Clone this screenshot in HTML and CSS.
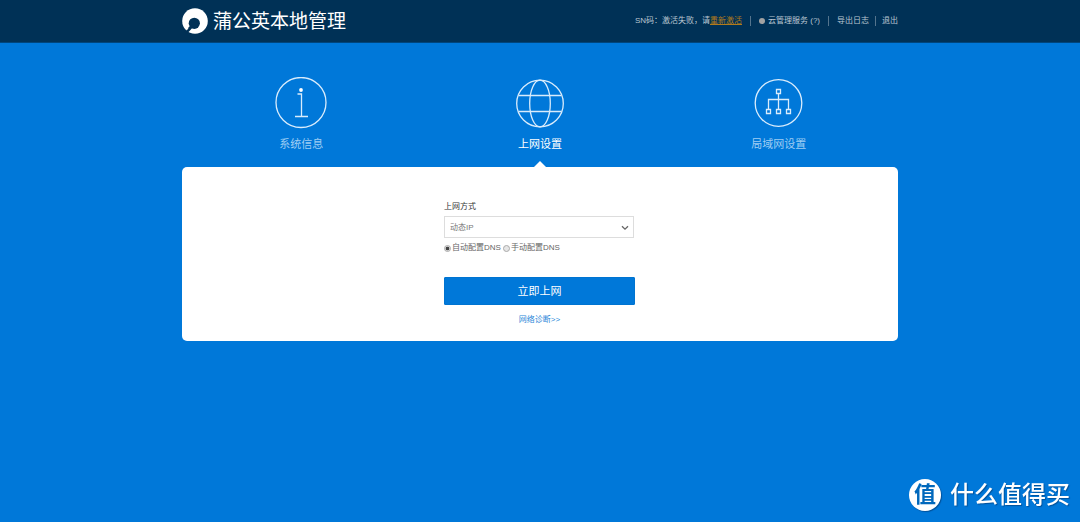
FILE: index.html
```html
<!DOCTYPE html>
<html lang="zh-CN">
<head>
<meta charset="utf-8">
<meta name="viewport" content="width=device-width, initial-scale=1">
<title>蒲公英本地管理</title>
<link rel="stylesheet" href="styles.css">
</head>
<body>
<header class="topbar">
  <div class="container topbar-inner">
    <div class="brand">
      <svg class="brand-logo" viewBox="0 0 26 26" aria-hidden="true">
        <circle cx="13" cy="13" r="12.8" fill="#fff"/>
        <circle cx="12.300" cy="15.300" r="5.600" fill="#003156"/>
        <path d="M10 18L3.500 25" stroke="#003156" stroke-width="3.200"/>
        <path d="M3.200 18.500L6.500 20.500L4.500 22.500Z" fill="#fff"/>
      </svg>
      <h1 class="brand-name">蒲公英本地管理</h1>
    </div>
    <nav class="links">
      <span class="links-item">SN码：激活失败，请<a class="activate" href="#">重新激活</a></span>
      <a class="links-item cloud" href="#"><span class="dot"></span>云管理服务 (?)</a>
      <a class="links-item" href="#">导出日志</a>
      <a class="links-item" href="#">退出</a>
    </nav>
  </div>
</header>
<main class="container">
  <nav class="tabs">
    <a class="tab" href="#">
      <svg class="tab-icon" viewBox="0 0 52 52" aria-hidden="true">
        <circle cx="26" cy="25.500" r="25"/>
        <circle class="solid" cx="26" cy="13" r="1.900"/>
        <path d="M22.500 17h4v22.500M20 39.500h13"/>
      </svg>
      <span>系统信息</span>
    </a>
    <a class="tab tab-active" href="#" aria-current="page">
      <svg class="tab-icon" viewBox="0 0 52 52" aria-hidden="true">
        <circle cx="26" cy="26.500" r="23.300"/>
        <ellipse cx="26" cy="26.500" rx="10.300" ry="23.300"/>
        <path d="M4.500 18.500h43M4.500 34.500h43"/>
      </svg>
      <span>上网设置</span>
    </a>
    <a class="tab" href="#">
      <svg class="tab-icon" viewBox="0 0 52 52" aria-hidden="true">
        <circle cx="25.500" cy="26" r="23.300"/>
        <path d="M23.500 12.500h4v4h-4zM13.500 32.500h4v4h-4zM23.500 32.500h4v4h-4zM33.500 32.500h4v4h-4zM25.500 16.500v16M15.500 32.500v-10h20v10"/>
      </svg>
      <span>局域网设置</span>
    </a>
  </nav>
  <section class="panel">
    <form class="form">
      <label class="form-label" for="mode">上网方式</label>
      <div class="select-wrap">
        <select class="select" id="mode"><option>动态IP</option></select>
        <svg class="chevron" viewBox="0 0 8 6" aria-hidden="true"><path d="M1 1.200l3 3l3-3"/></svg>
      </div>
      <div class="radios">
        <label class="radio"><input type="radio" name="dns" checked>自动配置DNS</label>
        <label class="radio"><input type="radio" name="dns">手动配置DNS</label>
      </div>
      <button class="submit" type="button">立即上网</button>
      <a class="diagnose" href="#">网络诊断&gt;&gt;</a>
    </form>
  </section>
</main>
<aside class="watermark">
  <span class="watermark-badge">值</span>
  <span>什么值得买</span>
</aside>
</body>
</html>
```
FILE: styles.css
```css
* { box-sizing: border-box; }

body {
  margin: 0;
  min-height: 100vh;
  background: #0078d9;
  font-family: "Liberation Sans", "Noto Sans CJK SC", sans-serif;
  font-size: 8px;
  line-height: 12px;
}

a { color: inherit; text-decoration: none; }

.container {
  width: 100%;
  max-width: 716px;
  margin: 0 auto;
}

.topbar {
  background: #003156;
  border-bottom: 1px solid #00457c;
}

.topbar-inner {
  display: flex;
  align-items: center;
  justify-content: space-between;
  min-height: 42px;
}

.brand {
  display: flex;
  align-items: center;
  gap: 5px;
}

.brand-logo { width: 26px; height: 26px; }

.brand-name {
  margin: 0;
  padding-top: 2px;
  font-size: 19px;
  font-weight: 400;
  line-height: 26px;
  color: #fff;
}

.links {
  display: flex;
  align-items: center;
  color: #b9c6d1;
}

.links-item {
  padding: 0 8px;
  line-height: 10px;
}

.links-item + .links-item { border-left: 1px solid #54748d; }
.links-item:last-child { padding: 0 0 0 6px; }
.links-item:nth-child(3) { padding-right: 6px; }

.activate { color: #b17b1b; text-decoration: underline; }

.cloud { display: flex; align-items: center; gap: 3px; }

.dot {
  width: 6px;
  height: 6px;
  border-radius: 50%;
  background: #a2a2a2;
}

.tabs {
  display: grid;
  grid-template-columns: repeat(3, 1fr);
  padding-top: 34px;
}

.tab {
  position: relative;
  display: flex;
  flex-direction: column;
  align-items: center;
  gap: 7px;
  padding-bottom: 15px;
  font-size: 11px;
  line-height: 16px;
  color: #9fcdf3;
}

.tab-active { color: #fff; }

.tab-active::after {
  content: "";
  position: absolute;
  bottom: 0;
  border: 6px solid transparent;
  border-top: 0;
  border-bottom-color: #fff;
}

.tab-icon {
  width: 52px;
  height: 52px;
  fill: none;
  stroke: #d9ecfc;
  stroke-width: 1.300;
}

.tab-icon .solid { fill: #fff; stroke: none; }

.panel {
  padding: 34px 16px 15px;
  border-radius: 5px;
  background: #fff;
}

.form {
  display: flex;
  flex-direction: column;
  width: 100%;
  max-width: 192px;
  margin: 0 auto;
  padding-right: 1px;
  color: #666;
}

.form-label { color: #333; }

.select-wrap {
  position: relative;
  margin: 3px 1px 4px 0;
}

.select {
  display: block;
  width: 100%;
  height: 22px;
  padding: 1px 5px 0;
  border: 1px solid #ddd;
  border-radius: 0;
  background: #fff;
  color: #777;
  font: inherit;
  appearance: none;
}

.chevron {
  position: absolute;
  top: 9px;
  right: 5px;
  width: 8px;
  height: 6px;
  fill: none;
  stroke: #666;
  stroke-width: 1.300;
  pointer-events: none;
}

.radios { display: flex; gap: 2px; }

.radio { display: flex; align-items: center; gap: 1px; }

.radio input {
  width: 7px;
  height: 7px;
  margin: 0;
  border: 1px solid #aaa;
  border-radius: 50%;
  background: #e6e6e6;
  appearance: none;
}

.radio input:checked { background: radial-gradient(circle, #444 45%, #ddd 60%); }

.submit {
  height: 28px;
  margin: 23px 0 9px;
  padding: 0;
  border: 1px solid #0074d1;
  border-radius: 1px;
  background: #0078d9;
  color: #fff;
  font: inherit;
  font-size: 11px;
}

.diagnose { align-self: center; color: #2a87d8; }

.watermark {
  position: fixed;
  right: 10px;
  bottom: 11px;
  display: flex;
  align-items: center;
  gap: 9px;
  font-size: 24px;
  font-weight: 500;
  line-height: 32px;
  color: #fff;
  text-shadow: 1px 1px 1px #00529b;
}

.watermark-badge {
  width: 32px;
  height: 32px;
  border-radius: 50%;
  background: #fff;
  box-shadow: 1px 1px 1px #00529b;
  color: #0068bc;
  font-size: 22px;
  font-weight: 700;
  text-align: center;
  text-shadow: none;
}
```
